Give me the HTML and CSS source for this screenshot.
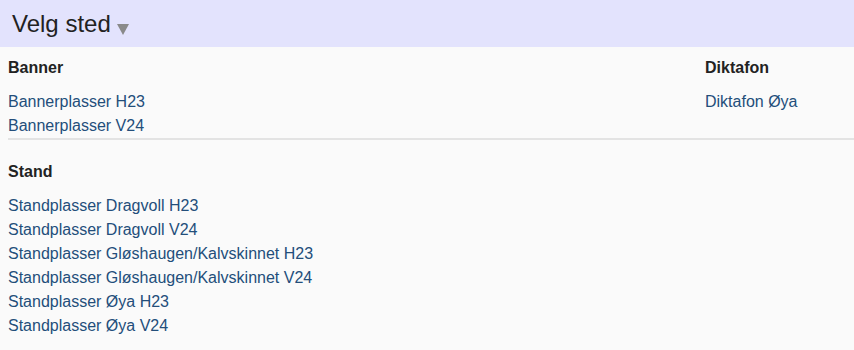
FILE: index.html
```html
<!DOCTYPE html>
<html lang="no">
<head>
    <meta charset="UTF-8">
    <meta name="viewport" content="width=device-width, initial-scale=1.0">
    <title>Velg sted</title>
    <link rel="stylesheet" href="styles.css">
</head>
<body>
    <div class="bar">
        Velg sted<svg class="caret" width="12" height="12" viewBox="0 0 12 12"><polygon points="0,1 12,1 6,12" /></svg>
    </div>

    <div class="group">
        <div class="col wide">
            <h3>Banner</h3>
            <ul>
                <li><a href="#">Bannerplasser H23</a></li>
                <li><a href="#">Bannerplasser V24</a></li>
            </ul>
        </div>
        <div class="col">
            <h3>Diktafon</h3>
            <ul>
                <li><a href="#">Diktafon Øya</a></li>
            </ul>
        </div>
    </div>

    <div class="group last">
        <div class="col wide">
            <h3>Stand</h3>
            <ul>
                <li><a href="#">Standplasser Dragvoll H23</a></li>
                <li><a href="#">Standplasser Dragvoll V24</a></li>
                <li><a href="#">Standplasser Gløshaugen/Kalvskinnet H23</a></li>
                <li><a href="#">Standplasser Gløshaugen/Kalvskinnet V24</a></li>
                <li><a href="#">Standplasser Øya H23</a></li>
                <li><a href="#">Standplasser Øya V24</a></li>
            </ul>
        </div>
    </div>
</body>
</html>
```

FILE: styles.css
```css
/*
reset
*/
body {
    margin: 0;
    background: #fafafa;
    font-family: "Liberation Sans", Arial, sans-serif;
    color: #222222;
}
ul, ul li {
    list-style: none;
    margin: 0;
    padding: 0;
}
a {
    text-decoration: none;
    color: #234e7a;
    font-size: 16px;
}

/*
header
*/
.bar {
    height: 47px;
    line-height: 47px;
    padding-left: 12px;
    background: #e3e3fd;
    font-size: 24px;
}
.bar .caret {
    fill: #8a8a8a;
    margin-left: 6px;
    vertical-align: -3px;
}

/*
groups
*/
.group {
    display: flex;
    margin-left: 8px;
    padding-top: 11px;
    border-bottom: 2px solid #e3e3e3;
}
.group + .group {
    padding-top: 22px;
}
.group.last {
    border-bottom: 0;
}
.col.wide {
    width: 697px;
}
.col h3 {
    margin: 0 0 12px;
    font-size: 16px;
    line-height: 20px;
}
.col li {
    line-height: 24px;
}
```
